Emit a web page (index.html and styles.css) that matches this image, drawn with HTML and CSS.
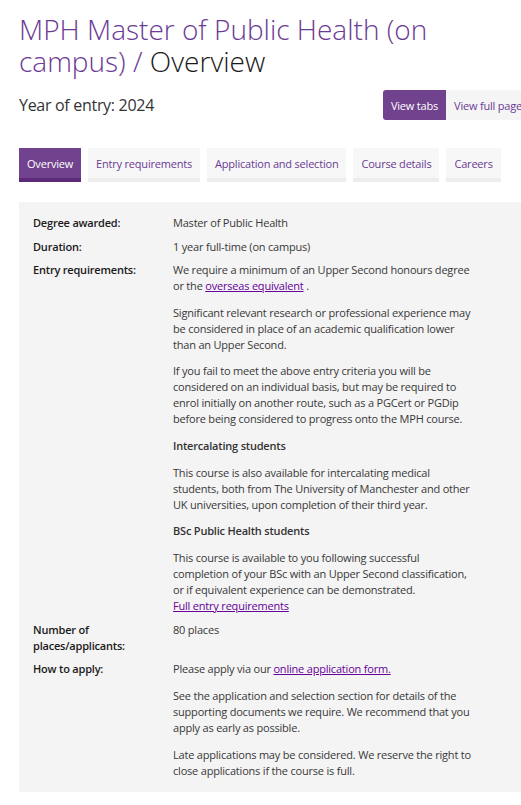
FILE: index.html
```html
<!DOCTYPE html>
<html lang="en">
<head>
<meta charset="utf-8">
<title>MPH Master of Public Health (on campus) / Overview</title>
<link rel="stylesheet" href="styles.css">
</head>
<body>
<div class="page">
  <h1 class="title"><span class="title-course">MPH Master of Public Health (on campus)</span> <span class="title-sep">/</span> <span class="title-section">Overview</span></h1>

  <div class="entry-row">
    <p class="year">Year of entry: 2024</p>
    <div class="view-toggle">
      <a class="view-btn view-btn--active" href="#">View tabs</a>
      <a class="view-btn" href="#">View full page</a>
    </div>
  </div>

  <nav class="tabs">
    <a class="tab tab--active" href="#">Overview</a>
    <a class="tab" href="#">Entry requirements</a>
    <a class="tab" href="#">Application and selection</a>
    <a class="tab" href="#">Course details</a>
    <a class="tab" href="#">Careers</a>
  </nav>

  <section class="facts">
    <div class="fact-label">Degree awarded:</div>
    <div class="fact-value"><p>Master of Public Health</p></div>

    <div class="fact-label">Duration:</div>
    <div class="fact-value"><p>1 year full-time (on campus)</p></div>

    <div class="fact-label">Entry requirements:</div>
    <div class="fact-value">
      <p>We require a minimum of an Upper Second honours degree or the <a href="#">overseas equivalent</a> .</p>
      <p>Significant relevant research or professional experience may be considered in place of an academic qualification lower than an Upper Second.</p>
      <p>If you fail to meet the above entry criteria you will be considered on an individual basis, but may be required to enrol initially on another route, such as a PGCert or PGDip before being considered to progress onto the MPH course.</p>
      <p class="subhead">Intercalating students</p>
      <p>This course is also available for intercalating medical students, both from The University of Manchester and other UK universities, upon completion of their third year.</p>
      <p class="subhead">BSc Public Health students</p>
      <p class="tight">This course is available to you following successful completion of your BSc with an Upper Second classification, or if equivalent experience can be demonstrated.</p>
      <p><a href="#">Full entry requirements</a></p>
    </div>

    <div class="fact-label">Number of places/applicants:</div>
    <div class="fact-value"><p>80 places</p></div>

    <div class="fact-label">How to apply:</div>
    <div class="fact-value">
      <p>Please apply via our <a href="#">online application form.</a></p>
      <p>See the application and selection section for details of the supporting documents we require. We recommend that you apply as early as possible.</p>
      <p>Late applications may be considered. We reserve the right to close applications if the course is full.</p>
    </div>
  </section>
</div>
</body>
</html>
```

FILE: styles.css
```css
html, body {
  margin: 0;
  padding: 0;
  overflow: hidden;
  background: #ffffff;
}

body {
  font-family: "Open Sans", "Liberation Sans", Arial, sans-serif;
  color: #333333;
}

.page {
  width: 511px;
  padding: 13px 0 0 19px;
}

.title {
  margin: 0;
  font-size: 28px;
  font-weight: 300;
  line-height: 32px;
  width: 430px;
}

.title-course,
.title-sep {
  color: #6b3a94;
}

.title-section {
  color: #1a1a1a;
}

.entry-row {
  display: flex;
  align-items: center;
  justify-content: space-between;
  margin-top: 13px;
  height: 30px;
}

.year {
  margin: 0;
  font-size: 16px;
  line-height: 22px;
  letter-spacing: -0.3px;
  color: #333333;
}

.view-toggle {
  display: flex;
  height: 30px;
}

.view-btn {
  display: flex;
  align-items: center;
  padding: 0 8px;
  font-size: 11px;
  letter-spacing: -0.2px;
  text-decoration: none;
  color: #6b3a94;
  background: #f5f5f5;
  white-space: nowrap;
}

.view-btn--active {
  background: #71428e;
  color: #ffffff;
  border-radius: 3px 0 0 3px;
}

.tabs {
  display: flex;
  gap: 7px;
  margin-top: 28px;
}

.tab {
  display: flex;
  align-items: center;
  height: 30px;
  padding: 0 8px;
  font-size: 11px;
  letter-spacing: -0.2px;
  text-decoration: none;
  color: #6b3a94;
  background: #f7f7f7;
  border-bottom: 4px solid #ededed;
  white-space: nowrap;
}

.tab--active {
  background: #71428e;
  color: #ffffff;
  border-bottom-color: #5b2a78;
}

.facts {
  display: grid;
  grid-template-columns: 140px 302px;
  row-gap: 7.5px;
  margin-top: 20px;
  padding: 13px 0 13px 14px;
  background: #f4f4f4;
  font-size: 11px;
  letter-spacing: -0.2px;
  line-height: 16px;
}

.fact-label {
  font-weight: 600;
  color: #1a1a1a;
  padding-right: 20px;
}

.fact-value {
  color: #383838;
}

.fact-value p {
  margin: 0 0 10.7px;
}

.fact-value p:last-child {
  margin-bottom: 0;
}

.fact-value p.tight {
  margin-bottom: 0;
}

.fact-value .subhead {
  font-weight: 600;
  color: #333333;
}

.fact-value a {
  color: #660099;
  text-decoration: underline;
}
```
